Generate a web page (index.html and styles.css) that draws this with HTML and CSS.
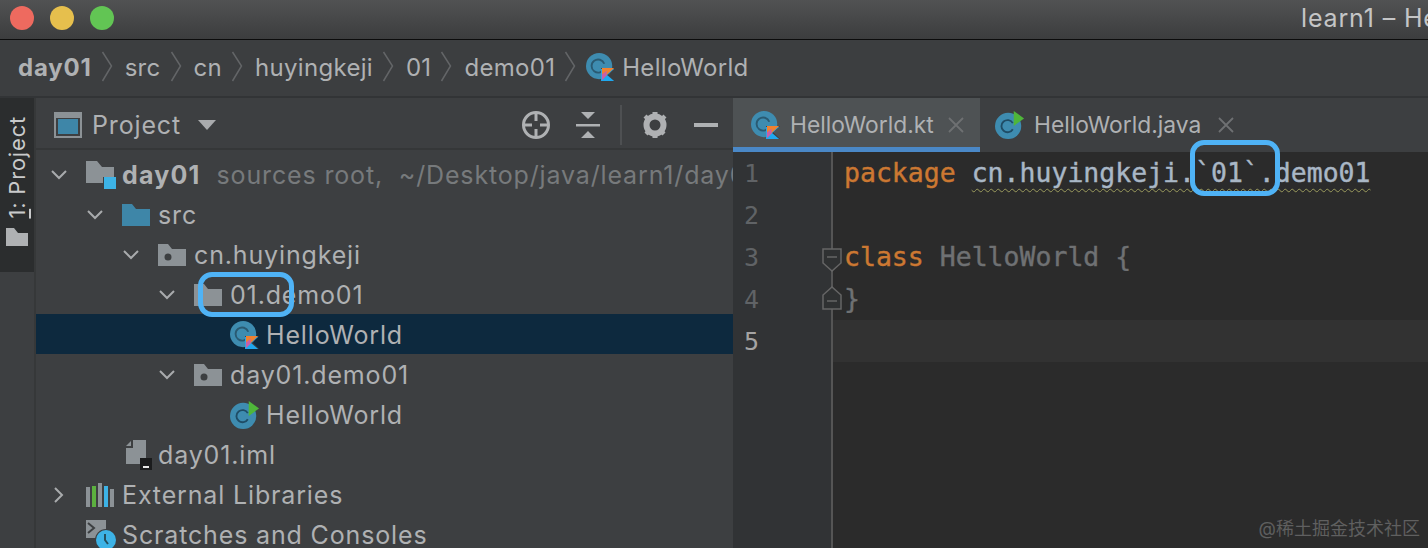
FILE: index.html
```html
<!DOCTYPE html>
<html lang="en">
<head>
    <meta charset="utf-8">
    <title>learn1 – HelloWorld.kt</title>
    <link rel="stylesheet" href="styles.css">
</head>
<body>
<svg class="defs" width="0" height="0">
    <defs>
        <symbol id="chev-down" viewBox="0 0 18 12"><path d="M2 2l7 7 7-7" fill="none" stroke="#a9abad" stroke-width="2"/></symbol>
        <symbol id="chev-right" viewBox="0 0 12 18"><path d="M2 2l7 7-7 7" fill="none" stroke="#a9abad" stroke-width="2"/></symbol>
        <symbol id="crumb-sep" viewBox="0 0 12 32"><path d="M1.500 1l9 14-9 15" fill="none" stroke="#636567" stroke-width="1.500"/></symbol>
        <symbol id="close" viewBox="0 0 16 16"><path d="M1 1l14 14M15 1L1 15" fill="none" stroke="#6e7072" stroke-width="1.800"/></symbol>
        <symbol id="pkg" viewBox="0 0 28 22"><path d="M0 0h10l4 5h14v17H0z" fill="#8c9296"/><circle cx="10" cy="13" r="3.500" fill="#3c3f41"/></symbol>
        <symbol id="kt" viewBox="0 0 32 32"><circle cx="14" cy="15" r="14" fill="#3e8cb0"/><path d="M19.500 12.500a7 7 0 1 0 0 5" fill="none" stroke="#2a5a72" stroke-width="2"/><path d="M16 17h15l-7 7 7 7H16z" fill="#3c3f41"/><path d="M16 18h14l-7.500 6.500L30 31H16z" fill="#1fa8ef"/><path d="M17 17h13L17 29z" fill="#ef8130"/><path d="M17 24l5-4 0 5-5 5z" fill="#c85fa8"/></symbol>
        <symbol id="java" viewBox="0 0 32 32"><circle cx="14" cy="17" r="14" fill="#3e8cb0"/><path d="M19 14a6.500 6.500 0 1 0 0 6.500" fill="none" stroke="#1f4d66" stroke-width="2"/><path d="M20 1l11 8-11 8z" fill="#4fb63a"/></symbol>
    </defs>
</svg>

<header class="titlebar">
    <i class="light red"></i><i class="light yellow"></i><i class="light green"></i>
    <span class="win-title">learn1 – HelloWorld.kt</span>
</header>

<nav class="crumbs">
    <b>day01</b><svg class="sep"><use href="#crumb-sep"/></svg>
    <span>src</span><svg class="sep"><use href="#crumb-sep"/></svg>
    <span>cn</span><svg class="sep"><use href="#crumb-sep"/></svg>
    <span>huyingkeji</span><svg class="sep"><use href="#crumb-sep"/></svg>
    <span>01</span><svg class="sep"><use href="#crumb-sep"/></svg>
    <span>demo01</span><svg class="sep sep-last"><use href="#crumb-sep"/></svg>
    <svg class="class-icon"><use href="#kt"/></svg><span class="crumb-last">HelloWorld</span>
</nav>

<div class="workspace">
    <aside class="side-strip">
        <div class="side-tab">
            <span class="side-label"><u>1</u>: Project</span>
            <svg class="side-folder" viewBox="0 0 22 18"><path d="M0 0h8l4 5h10v13H0z" fill="#afb1b3"/></svg>
        </div>
    </aside>

    <section class="project">
        <div class="project-head">
            <svg class="head-icon" viewBox="0 0 28 26"><rect x="1" y="1" width="26" height="24" fill="none" stroke="#8c9296" stroke-width="2"/><rect x="1" y="1" width="26" height="5" fill="#8c9296"/><rect x="4" y="7" width="20" height="15" fill="#3e86a8"/></svg>
            <span class="head-title">Project</span>
            <svg class="head-caret" viewBox="0 0 18 10"><path d="M0 0h18l-9 10z" fill="#a9abad"/></svg>
            <span class="head-tools">
                <svg class="tool" viewBox="0 0 28 28"><circle cx="14" cy="14" r="12.500" fill="none" stroke="#afb1b3" stroke-width="3"/><path d="M14 2v8M14 18v8M2 14h8M18 14h8" stroke="#afb1b3" stroke-width="3"/></svg>
                <svg class="tool collapse" viewBox="0 0 24 26"><path d="M5 0h14l-7 7zM5 26h14l-7-7zM0 12h24v2.500H0z" fill="#afb1b3"/></svg>
                <i class="tool-sep"></i>
                <svg class="tool gear" viewBox="0 0 26 26"><path d="M13 4.500a8.500 8.500 0 1 0 0 17a8.500 8.500 0 1 0 0-17z" fill="none" stroke="#afb1b3" stroke-width="6"/><path d="M10.500 0h5v5h-5zM10.500 21h5v5h-5zM1.500 5.500l3-3 4 4-3 3zM20.500 17l3 3.500-3 3-4-4zM24.500 5.500l-3-3-4 4 3 3zM5.500 17l-3 3.500 3 3 4-4z" fill="#afb1b3"/></svg>
                <i class="tool-min"></i>
            </span>
        </div>

        <ul class="tree">
            <li class="row lv0"><svg class="arrow"><use href="#chev-down"/></svg>
                <span class="icon"><svg class="folder-root" viewBox="0 0 30 28"><path d="M0 0h11l5 6h12v16H0z" fill="#8c9296"/><rect x="17" y="16" width="13" height="13" fill="#3c3f41"/><rect x="18" y="16" width="12" height="12" fill="#3db3e6"/></svg></span>
                <b>day01</b><span class="hint">sources root,  ~/Desktop/java/learn1/day01</span></li>
            <li class="row lv1"><svg class="arrow"><use href="#chev-down"/></svg>
                <span class="icon"><svg class="folder" viewBox="0 0 28 22"><path d="M0 0h10l4 5h14v17H0z" fill="#3e86a8"/></svg></span>
                src</li>
            <li class="row lv2"><svg class="arrow"><use href="#chev-down"/></svg>
                <span class="icon"><svg class="folder"><use href="#pkg"/></svg></span>
                cn.huyingkeji</li>
            <li class="row lv3"><svg class="arrow"><use href="#chev-down"/></svg>
                <span class="icon"><svg class="folder" viewBox="0 0 28 22"><path d="M0 0h10l4 5h14v17H0z" fill="#8c9296"/></svg></span>
                01.demo01</li>
            <li class="row lv4 selected"><span class="arrow"></span>
                <span class="icon"><svg class="class-icon"><use href="#kt"/></svg></span>
                HelloWorld</li>
            <li class="row lv3"><svg class="arrow"><use href="#chev-down"/></svg>
                <span class="icon"><svg class="folder"><use href="#pkg"/></svg></span>
                day01.demo01</li>
            <li class="row lv4"><span class="arrow"></span>
                <span class="icon"><svg class="class-icon"><use href="#java"/></svg></span>
                HelloWorld</li>
            <li class="row lv1"><span class="arrow"></span>
                <span class="icon"><svg class="iml" viewBox="0 0 26 30"><path d="M7 0h13v24H0V8h7z" fill="#8c9296"/><path d="M0 6l5-5v5z" fill="#8c9296"/><rect x="14" y="18" width="12" height="12" fill="#1b1c1d"/><rect x="17" y="26" width="6" height="2" fill="#e8e8e8"/></svg></span>
                day01.iml</li>
            <li class="row lv0"><svg class="arrow arrow-r"><use href="#chev-right"/></svg>
                <span class="icon"><svg class="libs" viewBox="0 0 28 24"><path d="M0 4h4v20H0z" fill="#8c9296"/><path d="M6 3h4v21H6z" fill="#5cb13f"/><path d="M12 0h4v24h-4z" fill="#8c9296"/><path d="M18 3h4v21h-4z" fill="#3db3e6"/><path d="M24 6h4v18h-4z" fill="#8c9296"/></svg></span>
                External Libraries</li>
            <li class="row lv0"><span class="arrow"></span>
                <span class="icon"><svg class="scratch" viewBox="0 0 30 30"><path d="M0 0h20v18H0z" fill="#8c9296"/><path d="M2 3l6 5-6 5" fill="none" stroke="#3c3f41" stroke-width="2"/><circle cx="20" cy="20" r="11" fill="#3c3f41"/><circle cx="20" cy="20" r="10" fill="#3db3e6"/><path d="M19 14v6l3 4" fill="none" stroke="#25505f" stroke-width="2"/></svg></span>
                Scratches and Consoles</li>
        </ul>
    </section>

    <section class="editor">
        <div class="tabs">
            <div class="tab active"><svg class="class-icon"><use href="#kt"/></svg>HelloWorld.kt<svg class="close"><use href="#close"/></svg></div>
            <div class="tab"><svg class="class-icon"><use href="#java"/></svg>HelloWorld.java<svg class="close"><use href="#close"/></svg></div>
        </div>
        <div class="code-area">
            <div class="gutter">
                <div>1</div>
                <div>2</div>
                <div>3</div>
                <div>4</div>
                <div class="current">5</div>
            </div>
            <div class="code">
                <div class="line"><span class="kw">package</span> <span class="warn">cn.huyingkeji.`01`.demo01</span></div>
                <div class="line"></div>
                <div class="line"><span class="kw">class</span> <span class="dim">HelloWorld {</span></div>
                <div class="line"><span class="dim">}</span></div>
                <div class="line caret-line"></div>
            </div>
            <svg class="fold fold-open" viewBox="0 0 20 24"><path d="M1 1h18v14l-9 8-9-8z" fill="#2f3132" stroke="#666" stroke-width="1.500"/><path d="M5 9h10" stroke="#666" stroke-width="1.500"/></svg>
            <svg class="fold fold-end" viewBox="0 0 20 24"><path d="M1 23h18V9L10 1 1 9z" fill="#2f3132" stroke="#666" stroke-width="1.500"/><path d="M5 15h10" stroke="#666" stroke-width="1.500"/></svg>
        </div>
    </section>
</div>

<i class="mark mark-tree"></i>
<i class="mark mark-code"></i>
<span class="watermark">@稀土掘金技术社区</span>
</body>
</html>
```

FILE: styles.css
```css
html, body {
    margin: 0;
    padding: 0;
    width: 100%;
    height: 100%;
    overflow: hidden;
    background: #3d3f41;
    color: #afb1b3;
    font-family: Inter, "Noto Sans CJK SC", sans-serif;
    font-size: 25px;
}

.defs {
    position: absolute;
}

.titlebar {
    display: flex;
    align-items: center;
    box-sizing: border-box;
    height: 40px;
    padding: 0 0 4px 10px;
    gap: 16px;
    background: linear-gradient(#515253, #3c3d3e);
    border-bottom: 1px solid #0c0c0c;
    white-space: nowrap;
    overflow: hidden;
}

.light {
    width: 24px;
    height: 24px;
    border-radius: 50%;
    flex: none;
}

.red { background: #ee6a5f; }
.yellow { background: #e6bf4d; }
.green { background: #62c554; }

.win-title {
    margin-left: 1171px;
    color: #c4c5c6;
    letter-spacing: 0.85px;
}

.crumbs {
    display: flex;
    align-items: center;
    box-sizing: border-box;
    height: 58px;
    padding: 0 0 2px 18px;
    background: #3c3e40;
    border-bottom: 2px solid #323436;
    font-size: 24px;
    letter-spacing: 0.3px;
    white-space: nowrap;
}

.crumbs b {
    letter-spacing: 0.8px;
}

.crumbs .sep {
    width: 12px;
    height: 32px;
    margin: 0 12px 0 9px;
    flex: none;
}

.crumbs .sep-last {
    margin-right: 10px;
}

.class-icon {
    width: 30px;
    height: 30px;
    flex: none;
}

.crumb-last {
    margin-left: 6px;
}

.workspace {
    display: flex;
    height: 450px;
}

.side-strip {
    width: 36px;
    flex: none;
    box-sizing: border-box;
    border-right: 2px solid #363839;
}

.side-tab {
    display: flex;
    flex-direction: column;
    align-items: center;
    box-sizing: border-box;
    height: 174px;
    padding-top: 18px;
    background: #2b2d2e;
}

.side-label {
    writing-mode: vertical-rl;
    transform: rotate(180deg);
    font-size: 22px;
    letter-spacing: 0.8px;
    color: #c9cacb;
}

.side-folder {
    width: 22px;
    height: 18px;
    margin-top: 9px;
}

.project {
    width: 697px;
    flex: none;
    overflow: hidden;
    letter-spacing: 0.85px;
}

.project-head {
    display: flex;
    align-items: center;
    box-sizing: border-box;
    height: 52px;
    padding: 4px 15px 0 18px;
    border-bottom: 2px solid #353738;
}

.head-icon {
    width: 28px;
    height: 26px;
}

.head-title {
    margin-left: 10px;
}

.head-caret {
    width: 18px;
    height: 10px;
    margin-left: 17px;
}

.head-tools {
    display: flex;
    align-items: center;
    margin-left: auto;
}

.tool {
    width: 28px;
    height: 28px;
}

.collapse {
    width: 24px;
    height: 26px;
    margin-left: 26px;
}

.tool-sep {
    width: 2px;
    height: 40px;
    margin: 0 20px;
    background: #4e5052;
}

.gear {
    width: 26px;
    height: 26px;
}

.tool-min {
    width: 24px;
    height: 4px;
    margin-left: 26px;
    background: #afb1b3;
}

.tree {
    list-style: none;
    margin: 0;
    padding: 4px 0 0;
}

.row {
    display: flex;
    align-items: center;
    box-sizing: border-box;
    height: 40px;
    padding-top: 2px;
    white-space: nowrap;
}

.lv0 { padding-left: 5px; }
.lv1 { padding-left: 41px; }
.lv2 { padding-left: 77px; }
.lv3 { padding-left: 113px; }
.lv4 { padding-left: 149px; }

.selected {
    background: #0d293e;
}

.arrow {
    display: block;
    flex: none;
    box-sizing: border-box;
    width: 45px;
    height: 12px;
}

svg.arrow {
    width: 18px;
    margin: 0 18px 0 9px;
}

svg.arrow-r {
    width: 12px;
    height: 18px;
    margin: 0 21px 0 12px;
}

.icon {
    display: flex;
    align-items: center;
    flex: none;
    width: 36px;
}

.folder {
    width: 28px;
    height: 22px;
}

.folder-root {
    width: 30px;
    height: 28px;
}

.iml {
    width: 26px;
    height: 30px;
    margin-left: 4px;
}

.libs {
    width: 28px;
    height: 24px;
}

.scratch {
    width: 30px;
    height: 30px;
}

.row b {
    font-weight: 700;
    letter-spacing: 1.2px;
    margin-right: 16px;
}

.hint {
    color: #777a7c;
    white-space: pre;
}

.editor {
    flex: 1;
    min-width: 0;
}

.tabs {
    display: flex;
    height: 54px;
    box-sizing: border-box;
    background: #3d3f41;
}

.tab {
    display: flex;
    align-items: center;
    gap: 9px;
    box-sizing: border-box;
    width: 247px;
    padding: 4px 0 0 18px;
    font-size: 22.800px;
    white-space: nowrap;
}

.tab.active {
    background: #4e5254;
    border-bottom: 5px solid #4a88c7;
}

.tab + .tab {
    width: 300px;
    padding-left: 15px;
    padding-bottom: 5px;
}

.close {
    flex: none;
    width: 16px;
    height: 16px;
    margin-left: 5px;
}

.tab + .tab .close {
    margin-left: 8px;
}

.code-area {
    position: relative;
    display: flex;
    height: 396px;
    background: #2b2b2b;
}

.gutter {
    box-sizing: border-box;
    width: 100px;
    flex: none;
    padding-top: 1px;
    background: #313335;
    border-right: 2px solid #555;
    font-family: "DejaVu Sans Mono", monospace;
    font-size: 25px;
    color: #606366;
}

.gutter div {
    height: 42px;
    line-height: 42px;
    padding-left: 11px;
}

.gutter .current {
    color: #a4a3a3;
}

.code {
    flex: 1;
    padding-left: 11px;
    font-family: "DejaVu Sans Mono", monospace;
    font-size: 26.500px;
}

.line {
    height: 42px;
    line-height: 42px;
    color: #a9b7c6;
    white-space: pre;
    -webkit-text-stroke: 0.4px;
}

.caret-line {
    margin-left: -11px;
    background: #323232;
}

.kw {
    color: #cc7832;
}

.dim {
    color: #6f7173;
}

.warn {
    text-decoration: underline wavy #9a9a5c 1px;
    text-underline-offset: 6px;
}

.fold {
    position: absolute;
    left: 89px;
    width: 20px;
    height: 24px;
}

.fold-open { top: 96px; }
.fold-end { top: 134px; }

.mark {
    position: absolute;
    box-sizing: border-box;
    border: 5px solid #4fb3f6;
    border-radius: 14px;
}

.mark-tree {
    left: 198px;
    top: 272px;
    width: 96px;
    height: 45px;
}

.mark-code {
    left: 1190px;
    top: 140px;
    width: 90px;
    height: 56px;
}

.watermark {
    position: absolute;
    right: 8px;
    bottom: 8px;
    font-size: 18px;
    color: rgba(255, 255, 255, 0.25);
}
```
